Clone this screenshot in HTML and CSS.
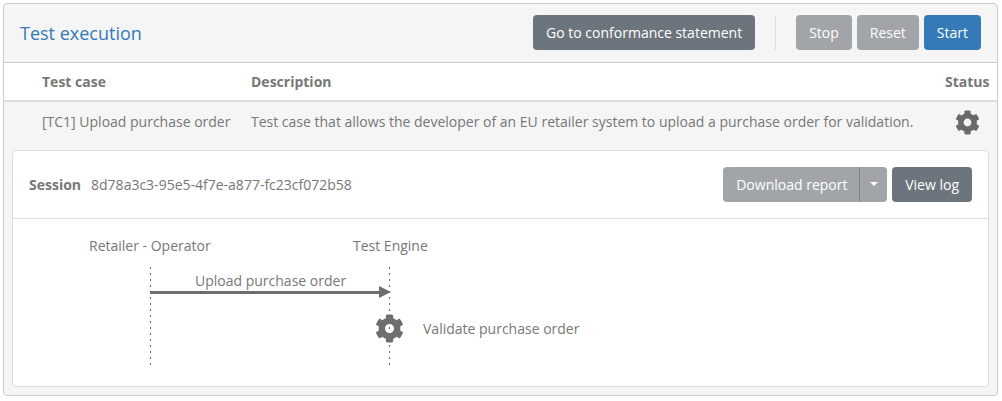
FILE: index.html
```html
<!DOCTYPE html>
<html lang="en">
<head>
<meta charset="utf-8">
<title>Test execution</title>
<link rel="stylesheet" href="styles.css">
</head>
<body>
<svg class="defs" width="0" height="0" aria-hidden="true"><defs><symbol id="cog" viewBox="0 0 512 512"><path d="M487.4 315.7l-42.6-24.6c4.3-23.2 4.3-47 0-70.2l42.6-24.6c4.9-2.8 7.1-8.6 5.5-14-11.1-35.6-30-67.8-54.7-94.6-3.8-4.1-10-5.1-14.8-2.3L380.8 110c-17.9-15.4-38.5-27.3-60.8-35.1V25.8c0-5.6-3.9-10.5-9.4-11.7-36.7-8.2-74.3-7.8-109.2 0-5.5 1.2-9.4 6.1-9.4 11.7V75c-22.2 7.9-42.8 19.8-60.8 35.1L88.7 85.5c-4.9-2.8-11-1.9-14.8 2.3-24.7 26.7-43.6 58.9-54.7 94.6-1.7 5.4.6 11.2 5.5 14L67.3 221c-4.3 23.2-4.3 47 0 70.2l-42.6 24.6c-4.9 2.8-7.1 8.6-5.5 14 11.1 35.6 30 67.8 54.7 94.6 3.8 4.1 10 5.1 14.8 2.3l42.6-24.6c17.9 15.4 38.5 27.3 60.8 35.1v49.2c0 5.6 3.9 10.5 9.4 11.7 36.7 8.2 74.3 7.8 109.2 0 5.5-1.2 9.4-6.1 9.4-11.7v-49.2c22.2-7.9 42.8-19.8 60.8-35.1l42.6 24.6c4.9 2.8 11 1.9 14.8-2.3 24.7-26.7 43.6-58.9 54.7-94.6 1.5-5.5-.7-11.3-5.6-14.1zM256 336c-44.1 0-80-35.9-80-80s35.9-80 80-80 80 35.9 80 80-35.9 80-80 80z"/></symbol></defs></svg>
<section class="panel">
  <header class="panel-head">
    <h1 class="title">Test execution</h1>
    <div class="actions">
      <button class="btn btn-dark">Go to conformance statement</button>
      <span class="sep"></span>
      <div class="group">
        <button class="btn btn-muted">Stop</button>
        <button class="btn btn-muted">Reset</button>
        <button class="btn btn-primary">Start</button>
      </div>
    </div>
  </header>
  <div class="row row-head">
    <div class="col-case">Test case</div>
    <div class="col-desc">Description</div>
    <div class="col-status">Status</div>
  </div>
  <div class="row row-body">
    <div class="col-case">[TC1] Upload purchase order</div>
    <div class="col-desc">Test case that allows the developer of an EU retailer system to upload a purchase order for validation.</div>
    <div class="col-status"><svg class="cog-status"><use href="#cog"/></svg></div>
  </div>
  <div class="session-wrap">
    <section class="session">
      <header class="session-head">
        <div class="session-id"><strong>Session</strong><span>8d78a3c3-95e5-4f7e-a877-fc23cf072b58</span></div>
        <div class="session-actions">
          <div class="split">
            <button class="btn btn-muted split-main">Download report</button>
            <button class="btn btn-muted split-caret" aria-label="More"><span class="caret"></span></button>
          </div>
          <button class="btn btn-dark">View log</button>
        </div>
      </header>
      <div class="diagram">
        <div class="actor actor-a">Retailer - Operator</div>
        <div class="actor actor-b">Test Engine</div>
        <div class="life life-a"></div>
        <div class="life life-b"></div>
        <div class="msg">Upload purchase order</div>
        <div class="arrow"></div>
        <svg class="cog-step"><use href="#cog"/></svg>
        <div class="step">Validate purchase order</div>
      </div>
    </section>
  </div>
</section>
</body>
</html>
```
FILE: styles.css
```css
* { box-sizing: border-box; }
html, body { margin: 0; background: #fff; }
body {
  padding: 3px 4px 0 3px;
  font-family: "Open Sans", "Liberation Sans", sans-serif;
  font-size: 14px;
  line-height: 20px;
  color: #777;
}
.defs { position: absolute; }
.panel {
  width: 995px;
  height: 393px;
  border: 1px solid #ccc;
  border-radius: 4px;
  background: #f5f5f5;
  overflow: hidden;
}
.panel-head {
  height: 59px;
  padding: 11px 16px 0 16px;
  display: flex;
  justify-content: space-between;
  align-items: flex-start;
  border-bottom: 1px solid #ccc;
}
.title {
  margin: 0;
  padding-top: 8px;
  font-size: 18px;
  line-height: 20px;
  font-weight: 400;
  color: #337ab7;
}
.actions { display: flex; align-items: stretch; }
.sep { width: 1px; margin: 0 20px; background: #ddd; }
.group { display: flex; gap: 5px; }
.btn {
  height: 35px;
  padding: 0 13px;
  border: 0;
  border-radius: 4px;
  font: inherit;
  color: #fff;
  white-space: nowrap;
}
.btn-dark { background: #6c757d; }
.btn-muted { background: #a1a5aa; }
.btn-primary { background: #337ab7; }
.row { display: flex; }
.row-head {
  height: 39px;
  padding-top: 9px;
  background: #fff;
  border-bottom: 2px solid #ddd;
  font-weight: 700;
}
.row-body { height: 48px; padding-top: 10px; }
.col-case { flex: none; width: 247px; padding-left: 38px; white-space: nowrap; }
.col-desc { flex: none; width: 693px; white-space: nowrap; }
.col-status { flex: 1; padding-left: 1px; white-space: nowrap; }
.cog-status { width: 25px; height: 25px; fill: #6a6a6a; display: block; margin: -2px 0 0 10px; }
.session-wrap { padding: 0 8px; }
.session {
  height: 237px;
  background: #fff;
  border: 1px solid #ddd;
  border-radius: 4px;
}
.session-head {
  height: 68px;
  padding: 16px 16px 0 16px;
  display: flex;
  justify-content: space-between;
  border-bottom: 1px solid #ddd;
}
.session-id { display: flex; gap: 10px; padding-top: 8px; }
.session-actions { display: flex; gap: 5px; }
.split { display: flex; }
.split-main { border-radius: 4px 0 0 4px; width: 137px; border-right: 1px solid #80858b; }
.split-caret { border-radius: 0 4px 4px 0; width: 27px; padding: 0; }
.caret {
  display: inline-block;
  vertical-align: middle;
  margin-bottom: 3px;
  border-top: 4px solid #fff;
  border-left: 4px solid transparent;
  border-right: 4px solid transparent;
}
.diagram { position: relative; height: 167px; }
.actor, .msg, .step { position: absolute; white-space: nowrap; }
.actor-a { left: 76px; top: 17px; }
.actor-b { left: 340px; top: 17px; }
.life {
  position: absolute;
  top: 48px;
  width: 1px;
  height: 100px;
  background: repeating-linear-gradient(to bottom, #666 0 2px, transparent 2px 6px);
}
.life-a { left: 137px; }
.life-b { left: 376px; }
.msg { left: 182px; top: 52px; }
.arrow { position: absolute; left: 137px; top: 72px; width: 230px; height: 3px; background: #6e6e6e; }
.arrow::after {
  content: "";
  position: absolute;
  left: 229px;
  top: -5px;
  border-left: 12px solid #6e6e6e;
  border-top: 6px solid transparent;
  border-bottom: 6px solid transparent;
}
.cog-step { position: absolute; left: 362px; top: 95px; width: 29px; height: 29px; fill: #6e6e6e; }
.step { left: 410px; top: 100px; }
```
